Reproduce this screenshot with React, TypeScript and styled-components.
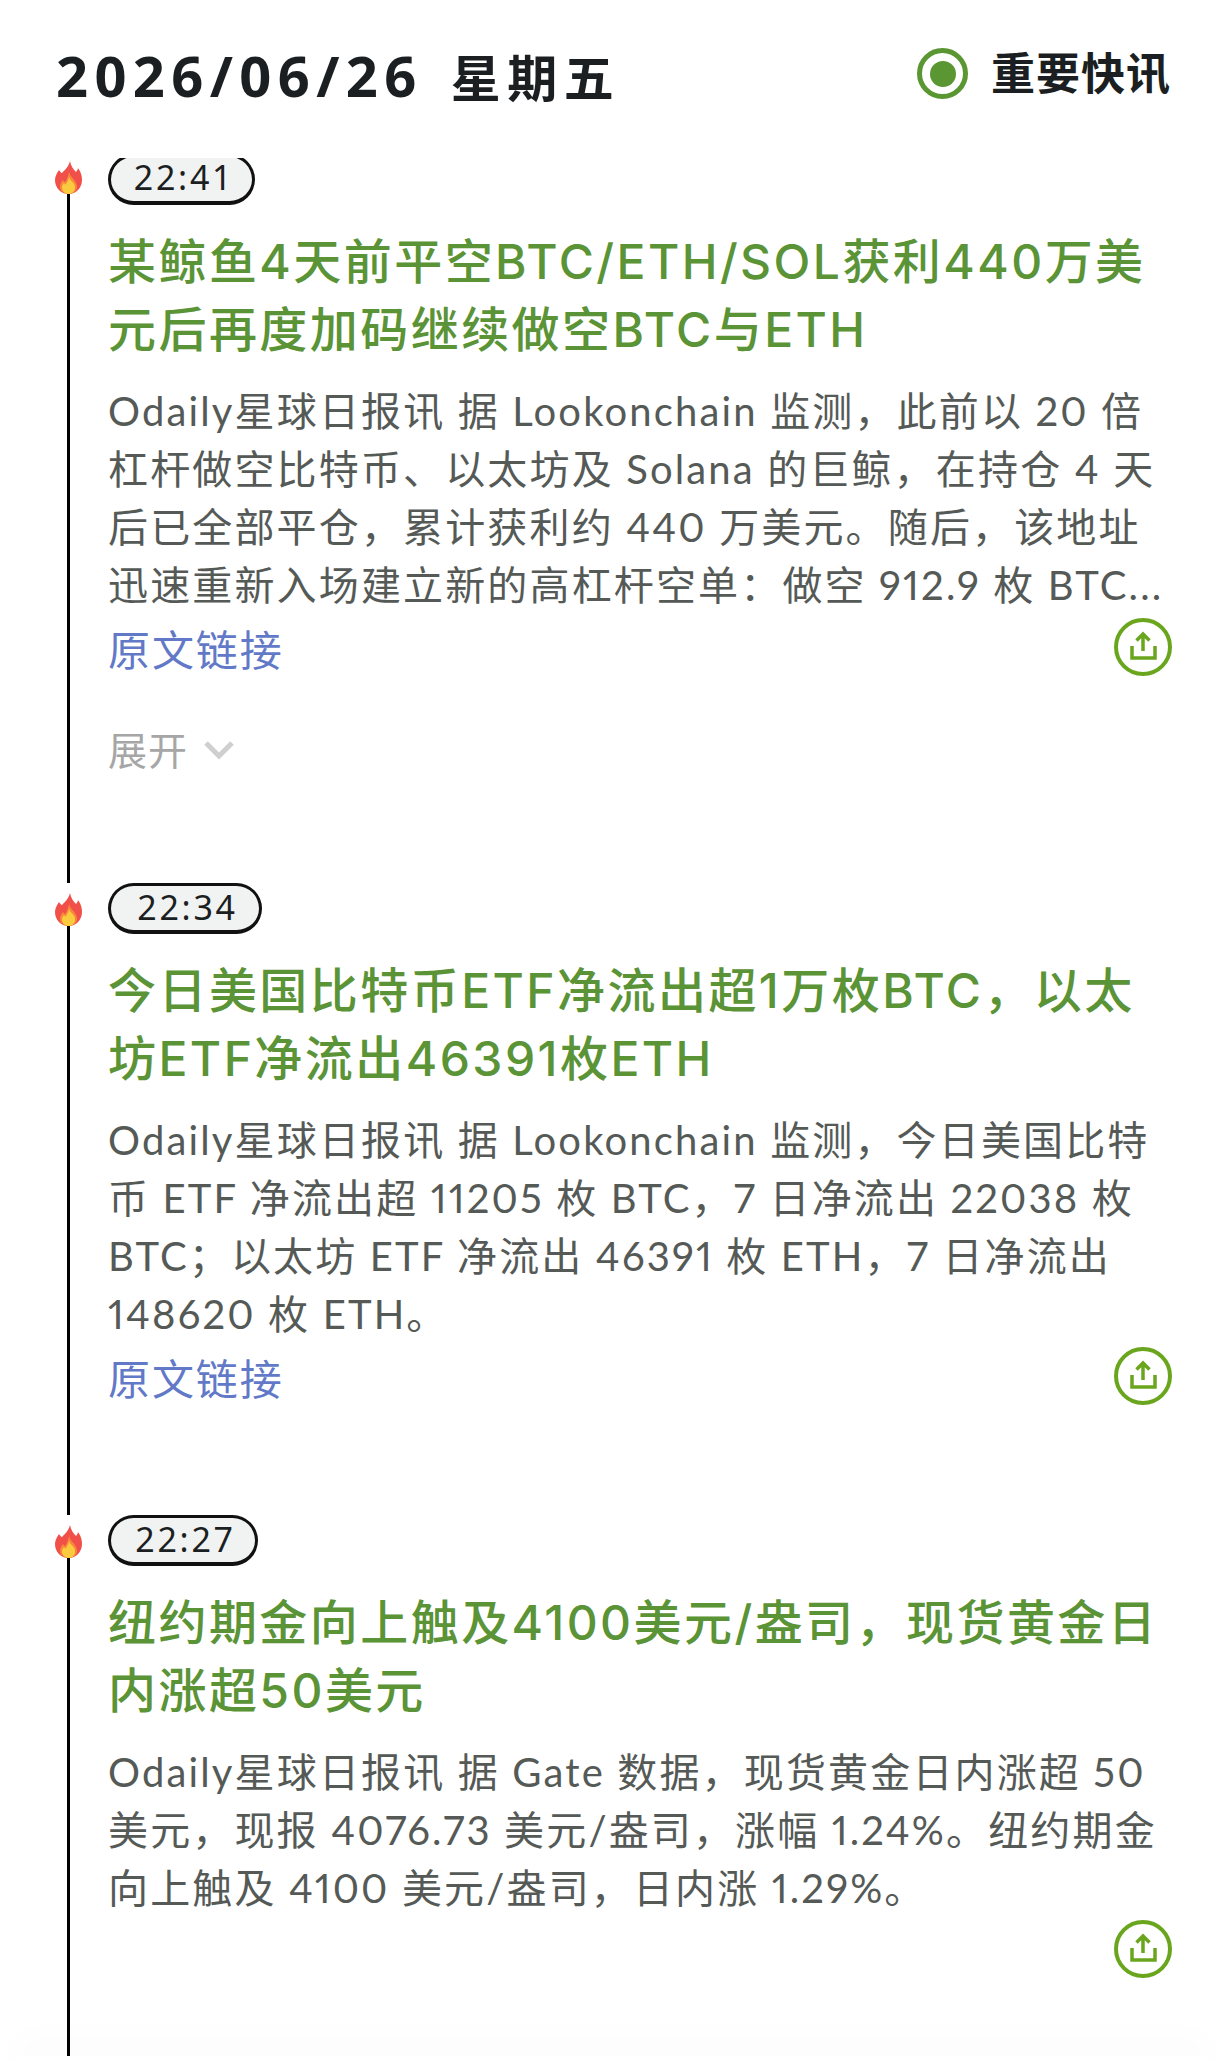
import React from 'react';
import styled, { createGlobalStyle } from 'styled-components';

const FONT = `"Noto Sans", "Noto Sans CJK SC", sans-serif`;

const GlobalStyle = createGlobalStyle`
  html, body {
    margin: 0;
    padding: 0;
    background: #fff;
  }
  * {
    box-sizing: border-box;
  }
`;

const Page = styled.div`
  width: 1224px;
  height: 2061px;
  display: flex;
  flex-direction: column;
  overflow: hidden;
  background: #fff;
  font-family: ${FONT};
`;

const Header = styled.header`
  height: 158px;
  flex: none;
  display: flex;
  justify-content: space-between;
  padding: 39px 53px 0 56px;
`;

const DateTitle = styled.h1`
  margin: 0;
  height: 72px;
  line-height: 72px;
  font-weight: 700;
  color: #1c1f22;
  white-space: pre;
  display: flex;
  align-items: baseline;
  gap: 28px;
`;

const DateDigits = styled.span`
  font-size: 56px;
  letter-spacing: 6.4px;
`;

const Weekday = styled.span`
  font-size: 50px;
  letter-spacing: 6.5px;
`;

const Filter = styled.div`
  display: flex;
  align-items: center;
  gap: 23px;
  height: 51px;
  margin-top: 9px;
`;

const Radio = styled.span`
  width: 51px;
  height: 51px;
  border: 5px solid #5a9632;
  border-radius: 50%;
  display: flex;
  align-items: center;
  justify-content: center;

  &::after {
    content: '';
    width: 26px;
    height: 26px;
    border-radius: 50%;
    background: #5a9632;
  }
`;

const FilterLabel = styled.span`
  font-size: 44px;
  line-height: 51px;
  font-weight: 700;
  letter-spacing: 1px;
  color: #1c1f22;
`;

const Feed = styled.main`
  flex: 1;
  min-height: 0;
  overflow: hidden;
`;

const Item = styled.article<{ $offset?: number }>`
  display: flex;
  padding-left: 55px;
  margin-top: ${(p) => p.$offset ?? 0}px;
`;

const Rail = styled.div<{ $flameTop: number }>`
  flex: none;
  width: 27px;
  margin-right: 26px;
  padding-top: ${(p) => p.$flameTop}px;
  display: flex;
  flex-direction: column;
  align-items: center;
`;

const RailLine = styled.div`
  flex: 1;
  width: 3px;
  background: #000;
`;

const Body = styled.div<{ $height: number }>`
  width: 1062px;
  height: ${(p) => p.$height}px;
`;

const TimePill = styled.div<{ $width: number; $raised?: boolean }>`
  width: ${(p) => p.$width}px;
  height: 51px;
  border: 3px solid #111;
  border-bottom-width: 4px;
  border-radius: 26px;
  background: #f1f2f2;
  display: flex;
  align-items: center;
  justify-content: center;
  padding: 0 0 ${(p) => (p.$raised ? 5 : 3)}px 5px;
  font-size: 34px;
  letter-spacing: 2.7px;
  color: #1c1f22;
`;

const Title = styled.h2`
  margin: 23px 0 0;
  font-family: Inter, "Noto Sans CJK SC", sans-serif;
  font-size: 48px;
  line-height: 68px;
  font-weight: 500;
  letter-spacing: 2.45px;
  color: #5b9337;
  white-space: pre;
`;

const Summary = styled.p`
  margin: 18px 0 0;
  font-family: Lato, "Noto Sans CJK SC", sans-serif;
  font-size: 40px;
  line-height: 58px;
  font-weight: 400;
  font-variant-numeric: proportional-nums;
  letter-spacing: 2.15px;
  color: #555a57;
  white-space: pre;
`;

const LinkRow = styled.div<{ $linked?: boolean }>`
  display: flex;
  justify-content: space-between;
  align-items: center;
  width: 1064px;
  height: 64px;
  margin-top: ${(p) => (p.$linked ? 1 : 0)}px;
`;

const SourceLink = styled.a`
  padding-top: 5px;
  font-size: 42px;
  line-height: 64px;
  letter-spacing: 1.9px;
  color: #6279c8;
`;

const ExpandRow = styled.div`
  display: flex;
  align-items: center;
  gap: 16px;
  margin-top: 43px;
  font-size: 39px;
  line-height: 56px;
  letter-spacing: 1px;
  color: #a6a6a6;
`;

const SheetEdge = styled.div`
  flex: none;
  height: 5px;
  margin: 0 16px;
  background: #fff;
  border-radius: 20px 20px 0 0;
  box-shadow: 0 -6px 36px rgba(0, 0, 0, 0.1);
  position: relative;
`;

const Flame = () => (
  <svg width="27" height="33" viewBox="0 0 27 33" style={{ flex: 'none' }}>
    <path
      d="M15 0c1 5 3 8 6 11 1-1 2-3 2-4 3 4 4 8 4 12 0 8-6 14-13.500 14S0 27 0 19c0-4 2-7 4-10 1 1 2 3 3 3 3-3 7-7 8-12z"
      fill="#f1504a"
    />
    <path
      d="M14 11c1 4 4 6 6 9 1 2 2 4 2 6 0 4-4 7-8.500 7S5 30 5 26c0-3 1-5 3-7 1 1 1 2 2 2 2-2 3-6 4-10z"
      fill="#f9873b"
    />
    <path
      d="M14 16c1 3 3 4 4.500 6 1 1 1.500 3 1.500 4.500 0 4-3 6.500-6.500 6.500S7 30 7 26.500c0-2 1-3.500 2-4.500 1 1 1 1.500 1.500 1.500 1.500-2 3-4.500 3.500-7.500z"
      fill="#fbcb3f"
    />
  </svg>
);

const ShareIcon = () => (
  <svg width="58" height="58" viewBox="0 0 58 58" fill="none" stroke="#6aa51e">
    <circle cx="29" cy="29" r="27" strokeWidth="4" />
    <path d="M18 28v12h23V28" strokeWidth="3.500" />
    <path d="M29 33V16M22.500 22.500 29 16l6.500 6.500" strokeWidth="3.500" />
  </svg>
);

const Chevron = () => (
  <svg width="30" height="20" viewBox="0 0 30 20" fill="none" stroke="#cfcfcf" strokeWidth="5">
    <path d="M2 3l13 13L28 3" />
  </svg>
);

type NewsItem = {
  time: string;
  pillWidth: number;
  title: string;
  summary: string;
  height: number;
  flameTop: number;
  hasLink?: boolean;
  canExpand?: boolean;
  offset?: number;
};

const items: NewsItem[] = [
  {
    time: '22:41',
    pillWidth: 147,
    title: '某鲸鱼4天前平空BTC/ETH/SOL获利440万美\n元后再度加码继续做空BTC与ETH',
    summary:
      'Odaily星球日报讯 据 Lookonchain 监测，此前以 20 倍\n杠杆做空比特币、以太坊及 Solana 的巨鲸，在持仓 4 天\n后已全部平仓，累计获利约 440 万美元。随后，该地址\n迅速重新入场建立新的高杠杆空单：做空 912.9 枚 BTC...',
    height: 729,
    flameTop: 7,
    hasLink: true,
    canExpand: true,
    offset: -4,
  },
  {
    time: '22:34',
    pillWidth: 154,
    title: '今日美国比特币ETF净流出超1万枚BTC，以太\n坊ETF净流出46391枚ETH',
    summary:
      'Odaily星球日报讯 据 Lookonchain 监测，今日美国比特\n币 ETF 净流出超 11205 枚 BTC，7 日净流出 22038 枚\nBTC；以太坊 ETF 净流出 46391 枚 ETH，7 日净流出\n148620 枚 ETH。',
    height: 632,
    flameTop: 10,
    hasLink: true,
  },
  {
    time: '22:27',
    pillWidth: 150,
    title: '纽约期金向上触及4100美元/盎司，现货黄金日\n内涨超50美元',
    summary:
      'Odaily星球日报讯 据 Gate 数据，现货黄金日内涨超 50\n美元，现报 4076.73 美元/盎司，涨幅 1.24%。纽约期金\n向上触及 4100 美元/盎司，日内涨 1.29%。',
    height: 560,
    flameTop: 10,
  },
];

export default function App() {
  return (
    <Page>
      <GlobalStyle />
      <Header>
        <DateTitle>
          <DateDigits>2026/06/26</DateDigits>
          <Weekday>星期五</Weekday>
        </DateTitle>
        <Filter>
          <Radio />
          <FilterLabel>重要快讯</FilterLabel>
        </Filter>
      </Header>
      <Feed>
        {items.map((item) => (
          <Item key={item.time} $offset={item.offset}>
            <Rail $flameTop={item.flameTop}>
              <Flame />
              <RailLine />
            </Rail>
            <Body $height={item.height}>
              <TimePill $width={item.pillWidth} $raised={item.offset !== undefined}>
                {item.time}
              </TimePill>
              <Title>{item.title}</Title>
              <Summary>{item.summary}</Summary>
              <LinkRow $linked={item.hasLink}>
                {item.hasLink ? <SourceLink>原文链接</SourceLink> : <span />}
                <ShareIcon />
              </LinkRow>
              {item.canExpand && (
                <ExpandRow>
                  展开
                  <Chevron />
                </ExpandRow>
              )}
            </Body>
          </Item>
        ))}
      </Feed>
      <SheetEdge />
    </Page>
  );
}
